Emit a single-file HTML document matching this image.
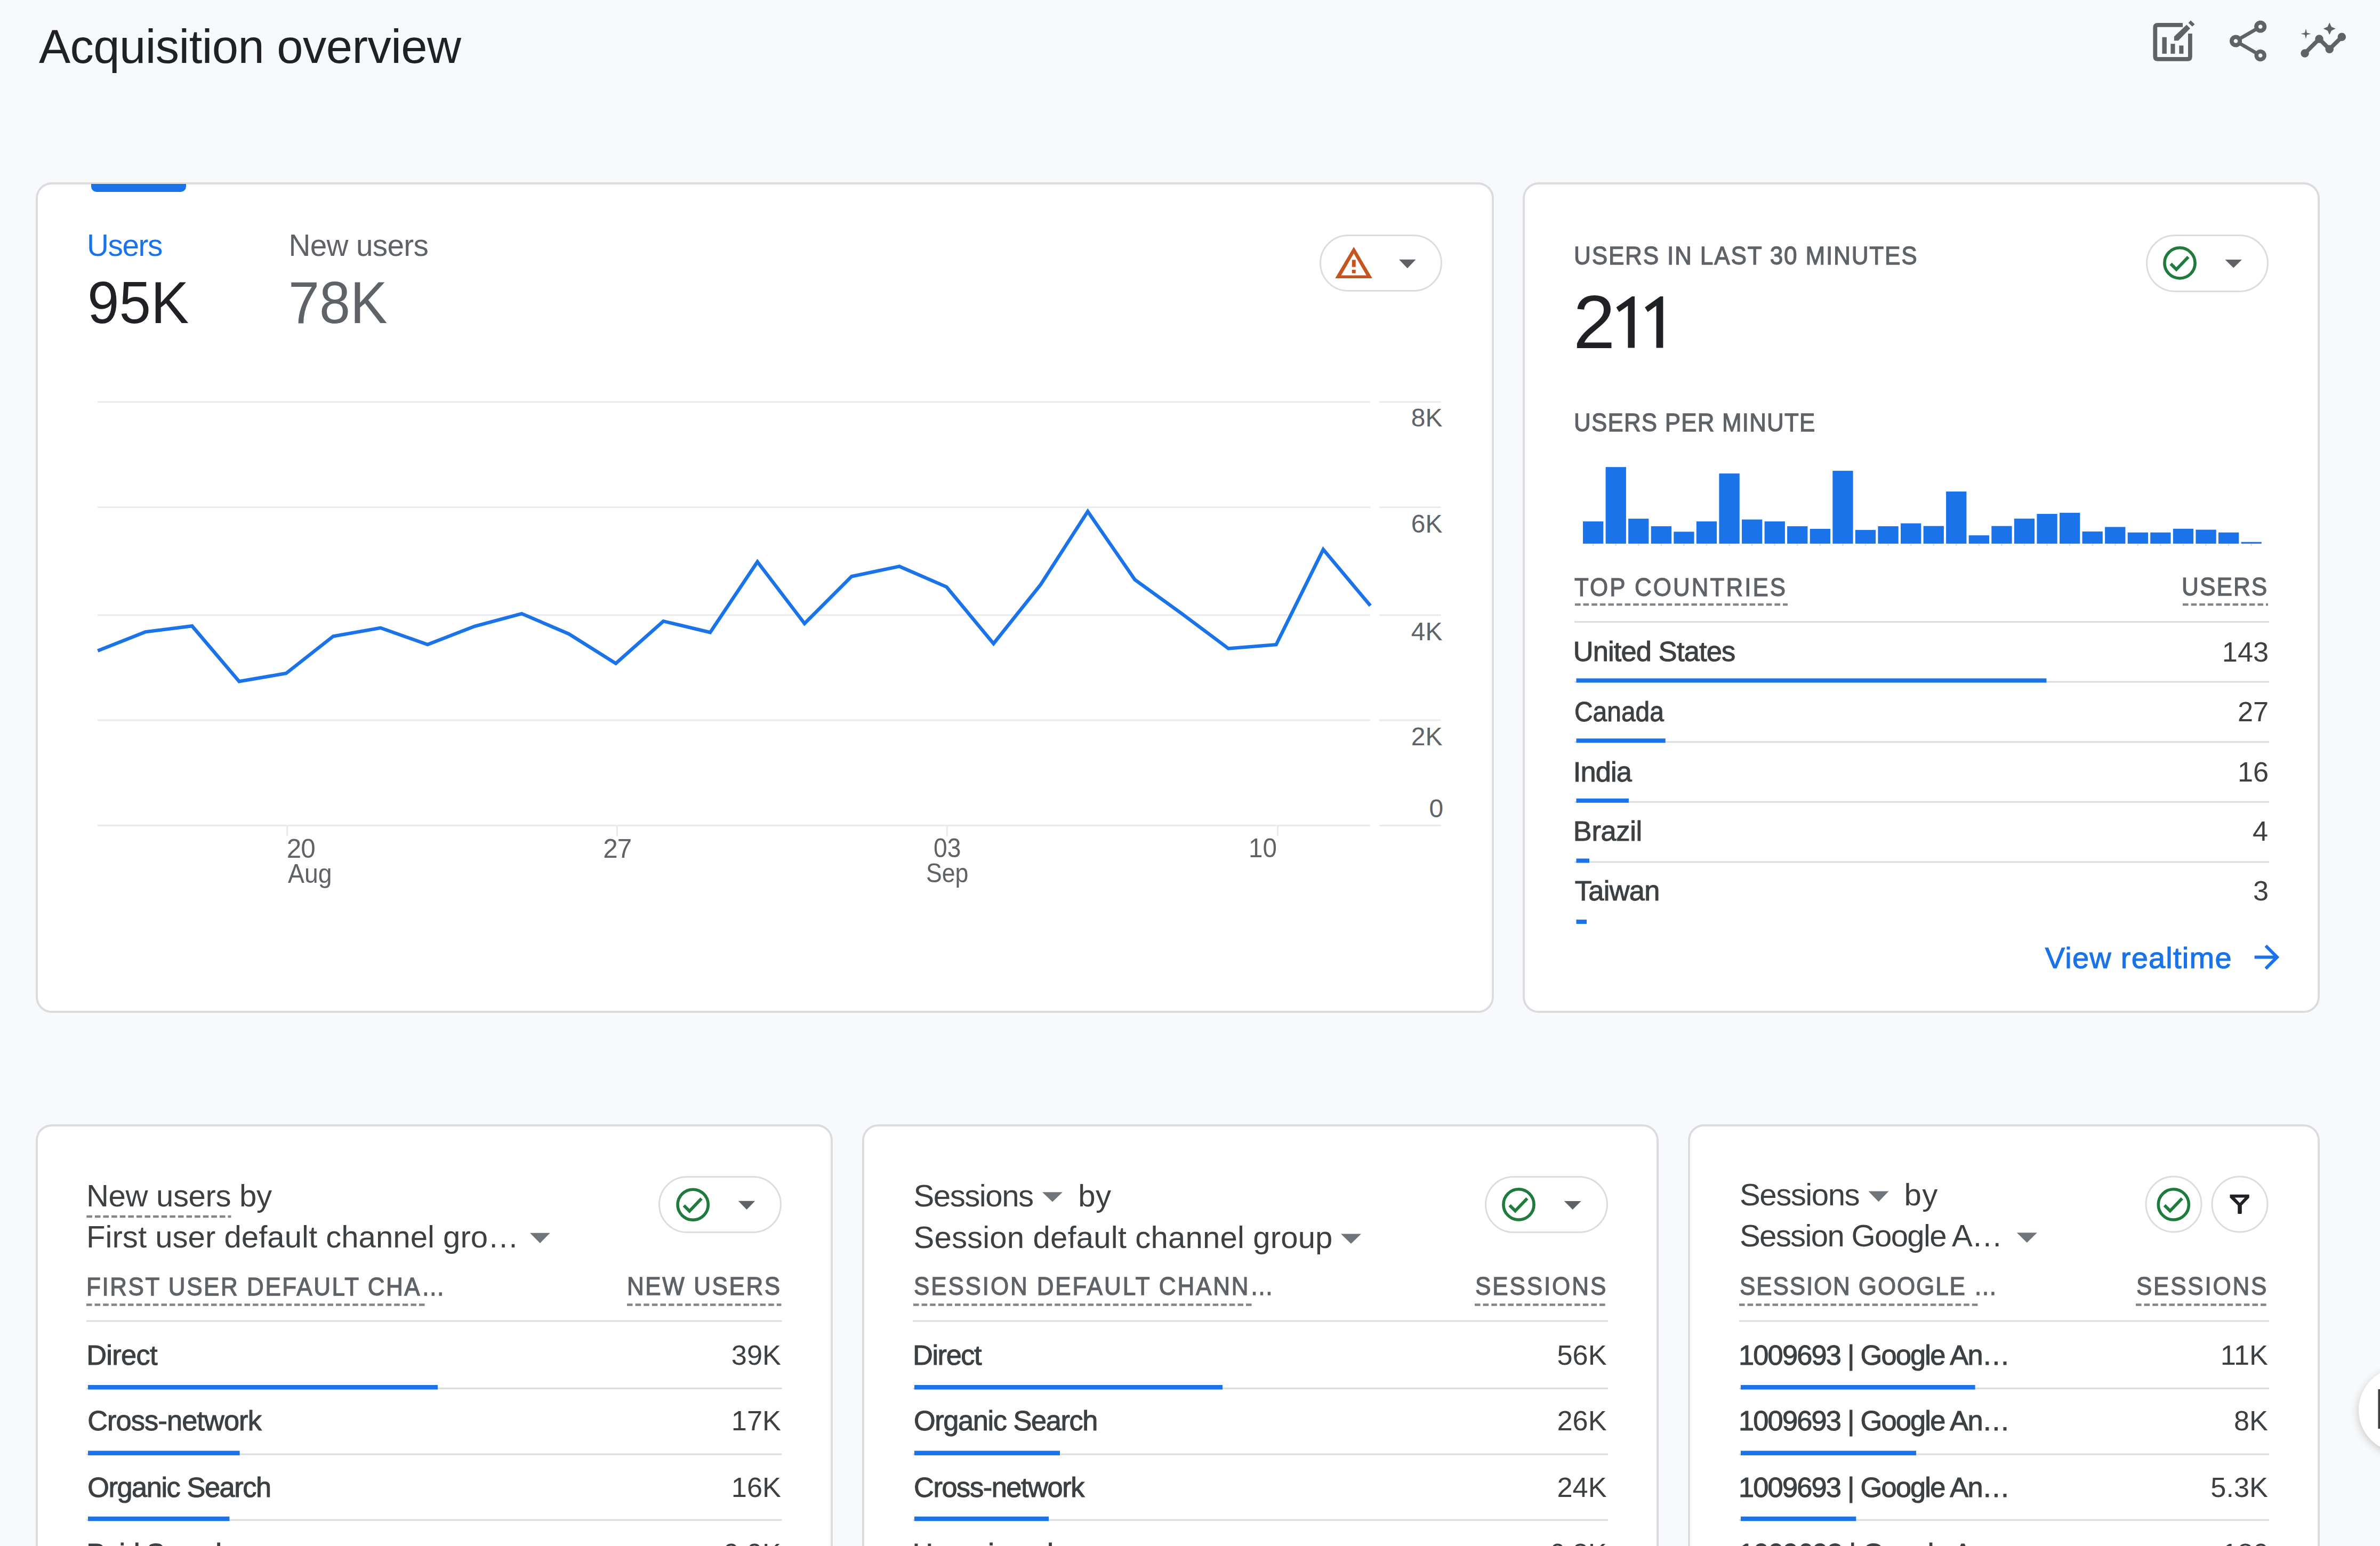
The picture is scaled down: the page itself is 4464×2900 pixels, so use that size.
<!DOCTYPE html>
<html><head><meta charset="utf-8"><style>
html,body{margin:0;padding:0;width:4464px;height:2900px;overflow:hidden;background:#f8f9fa;}
body{position:relative;font-family:"Liberation Sans",sans-serif;}
.card{position:absolute;background:#fff;border:4px solid #dadce0;border-radius:30px;box-sizing:border-box;}
.t{position:absolute;white-space:nowrap;font-family:"Liberation Sans",sans-serif;}
svg{position:absolute;left:0;top:0;}
</style></head><body>
<div class="card" style="left:67px;top:342px;width:2735px;height:1558px;"></div>
<div class="card" style="left:2856px;top:342px;width:1495px;height:1558px;"></div>
<div class="card" style="left:67px;top:2108.5px;width:1495px;height:900px;"></div>
<div class="card" style="left:1617px;top:2108.5px;width:1494px;height:900px;"></div>
<div class="card" style="left:3166px;top:2108.5px;width:1185px;height:900px;"></div>
<div style="position:absolute;left:171px;top:345px;width:178px;height:15px;background:#1a73e8;border-radius:0 0 10px 10px;"></div>
<svg width="4464" height="2900" viewBox="0 0 4464 2900">
<rect x="183.0" y="752.5" width="2387.0" height="3.0" rx="0" fill="#e8eaed"/>
<rect x="2587.0" y="752.5" width="115.5" height="3.0" rx="0" fill="#e8eaed"/>
<rect x="183.0" y="950.0" width="2387.0" height="3.0" rx="0" fill="#e8eaed"/>
<rect x="2587.0" y="950.0" width="115.5" height="3.0" rx="0" fill="#e8eaed"/>
<rect x="183.0" y="1152.3" width="2387.0" height="3.0" rx="0" fill="#e8eaed"/>
<rect x="2587.0" y="1152.3" width="115.5" height="3.0" rx="0" fill="#e8eaed"/>
<rect x="183.0" y="1349.5" width="2387.0" height="3.0" rx="0" fill="#e8eaed"/>
<rect x="2587.0" y="1349.5" width="115.5" height="3.0" rx="0" fill="#e8eaed"/>
<rect x="183.0" y="1547.0" width="2387.0" height="3.0" rx="0" fill="#e8eaed"/>
<rect x="2587.0" y="1547.0" width="115.5" height="3.0" rx="0" fill="#e8eaed"/>
<rect x="537.2" y="1548.5" width="3.0" height="20.0" rx="0" fill="#e8eaed"/>
<rect x="1155.9" y="1548.5" width="3.0" height="20.0" rx="0" fill="#e8eaed"/>
<rect x="1774.9" y="1548.5" width="3.0" height="20.0" rx="0" fill="#e8eaed"/>
<rect x="2395.1" y="1548.5" width="3.0" height="20.0" rx="0" fill="#e8eaed"/>
<polyline points="183.3,1220.7 272.5,1185.4 360.3,1174.3 448.5,1278.2 536.7,1263 625,1193.5 713.7,1177.8 802,1209 890.2,1174.8 978.5,1151.1 1066.7,1189 1155,1244.4 1244.2,1165.2 1332,1186.2 1420.6,1053.9 1509,1169.6 1597.3,1081.3 1686.9,1062.4 1775.2,1100.8 1863.5,1207.4 1951.9,1096.5 2040.2,959.4 2128.6,1087.4 2217,1151.3 2304,1216.5 2393.6,1209.2 2481.9,1030.7 2570.3,1136.1" fill="none" stroke="#1a73e8" stroke-width="6.5" stroke-linejoin="miter"/>
<rect x="2969.0" y="978.1" width="38.3" height="41.7" rx="0" fill="#1a73e8"/>
<rect x="2986.7" y="1020.5" width="3.0" height="3.0" rx="0" fill="#dadce0"/>
<rect x="3011.6" y="876.1" width="38.3" height="143.7" rx="0" fill="#1a73e8"/>
<rect x="3029.2" y="1020.5" width="3.0" height="3.0" rx="0" fill="#dadce0"/>
<rect x="3054.1" y="972.9" width="38.3" height="46.9" rx="0" fill="#1a73e8"/>
<rect x="3071.8" y="1020.5" width="3.0" height="3.0" rx="0" fill="#dadce0"/>
<rect x="3096.7" y="987.1" width="38.3" height="32.7" rx="0" fill="#1a73e8"/>
<rect x="3114.4" y="1020.5" width="3.0" height="3.0" rx="0" fill="#dadce0"/>
<rect x="3139.3" y="997.4" width="38.3" height="22.4" rx="0" fill="#1a73e8"/>
<rect x="3156.9" y="1020.5" width="3.0" height="3.0" rx="0" fill="#dadce0"/>
<rect x="3181.8" y="978.1" width="38.3" height="41.7" rx="0" fill="#1a73e8"/>
<rect x="3199.5" y="1020.5" width="3.0" height="3.0" rx="0" fill="#dadce0"/>
<rect x="3224.4" y="888.2" width="38.3" height="131.6" rx="0" fill="#1a73e8"/>
<rect x="3242.1" y="1020.5" width="3.0" height="3.0" rx="0" fill="#dadce0"/>
<rect x="3267.0" y="974.5" width="38.3" height="45.3" rx="0" fill="#1a73e8"/>
<rect x="3284.6" y="1020.5" width="3.0" height="3.0" rx="0" fill="#dadce0"/>
<rect x="3309.6" y="978.1" width="38.3" height="41.7" rx="0" fill="#1a73e8"/>
<rect x="3327.2" y="1020.5" width="3.0" height="3.0" rx="0" fill="#dadce0"/>
<rect x="3352.1" y="987.1" width="38.3" height="32.7" rx="0" fill="#1a73e8"/>
<rect x="3369.8" y="1020.5" width="3.0" height="3.0" rx="0" fill="#dadce0"/>
<rect x="3394.7" y="992.0" width="38.3" height="27.8" rx="0" fill="#1a73e8"/>
<rect x="3412.3" y="1020.5" width="3.0" height="3.0" rx="0" fill="#dadce0"/>
<rect x="3437.3" y="883.1" width="38.3" height="136.7" rx="0" fill="#1a73e8"/>
<rect x="3454.9" y="1020.5" width="3.0" height="3.0" rx="0" fill="#dadce0"/>
<rect x="3479.8" y="994.1" width="38.3" height="25.7" rx="0" fill="#1a73e8"/>
<rect x="3497.5" y="1020.5" width="3.0" height="3.0" rx="0" fill="#dadce0"/>
<rect x="3522.4" y="987.1" width="38.3" height="32.7" rx="0" fill="#1a73e8"/>
<rect x="3540.1" y="1020.5" width="3.0" height="3.0" rx="0" fill="#dadce0"/>
<rect x="3565.0" y="981.7" width="38.3" height="38.1" rx="0" fill="#1a73e8"/>
<rect x="3582.6" y="1020.5" width="3.0" height="3.0" rx="0" fill="#dadce0"/>
<rect x="3607.6" y="986.7" width="38.3" height="33.1" rx="0" fill="#1a73e8"/>
<rect x="3625.2" y="1020.5" width="3.0" height="3.0" rx="0" fill="#dadce0"/>
<rect x="3650.1" y="922.0" width="38.3" height="97.8" rx="0" fill="#1a73e8"/>
<rect x="3667.8" y="1020.5" width="3.0" height="3.0" rx="0" fill="#dadce0"/>
<rect x="3692.7" y="1004.2" width="38.3" height="15.6" rx="0" fill="#1a73e8"/>
<rect x="3710.3" y="1020.5" width="3.0" height="3.0" rx="0" fill="#dadce0"/>
<rect x="3735.3" y="986.7" width="38.3" height="33.1" rx="0" fill="#1a73e8"/>
<rect x="3752.9" y="1020.5" width="3.0" height="3.0" rx="0" fill="#dadce0"/>
<rect x="3777.8" y="972.8" width="38.3" height="47.0" rx="0" fill="#1a73e8"/>
<rect x="3795.5" y="1020.5" width="3.0" height="3.0" rx="0" fill="#dadce0"/>
<rect x="3820.4" y="964.0" width="38.3" height="55.8" rx="0" fill="#1a73e8"/>
<rect x="3838.1" y="1020.5" width="3.0" height="3.0" rx="0" fill="#dadce0"/>
<rect x="3863.0" y="961.9" width="38.3" height="57.9" rx="0" fill="#1a73e8"/>
<rect x="3880.6" y="1020.5" width="3.0" height="3.0" rx="0" fill="#dadce0"/>
<rect x="3905.5" y="997.0" width="38.3" height="22.8" rx="0" fill="#1a73e8"/>
<rect x="3923.2" y="1020.5" width="3.0" height="3.0" rx="0" fill="#dadce0"/>
<rect x="3948.1" y="988.5" width="38.3" height="31.3" rx="0" fill="#1a73e8"/>
<rect x="3965.8" y="1020.5" width="3.0" height="3.0" rx="0" fill="#dadce0"/>
<rect x="3990.7" y="998.8" width="38.3" height="21.0" rx="0" fill="#1a73e8"/>
<rect x="4008.3" y="1020.5" width="3.0" height="3.0" rx="0" fill="#dadce0"/>
<rect x="4033.2" y="998.8" width="38.3" height="21.0" rx="0" fill="#1a73e8"/>
<rect x="4050.9" y="1020.5" width="3.0" height="3.0" rx="0" fill="#dadce0"/>
<rect x="4075.8" y="991.8" width="38.3" height="28.0" rx="0" fill="#1a73e8"/>
<rect x="4093.5" y="1020.5" width="3.0" height="3.0" rx="0" fill="#dadce0"/>
<rect x="4118.4" y="993.6" width="38.3" height="26.2" rx="0" fill="#1a73e8"/>
<rect x="4136.0" y="1020.5" width="3.0" height="3.0" rx="0" fill="#dadce0"/>
<rect x="4161.0" y="998.8" width="38.3" height="21.0" rx="0" fill="#1a73e8"/>
<rect x="4178.6" y="1020.5" width="3.0" height="3.0" rx="0" fill="#dadce0"/>
<rect x="4203.5" y="1016.6" width="38.3" height="3.2" rx="0" fill="#1a73e8"/>
<rect x="4221.2" y="1020.5" width="3.0" height="3.0" rx="0" fill="#dadce0"/>
<line x1="2954" y1="1134" x2="3353" y2="1134" stroke="#80868b" stroke-width="4.5" stroke-dasharray="10.6 5.0"/>
<line x1="4094" y1="1134" x2="4254" y2="1134" stroke="#80868b" stroke-width="4.5" stroke-dasharray="10.6 5.0"/>
<rect x="2953.0" y="1165.0" width="1303.0" height="3.0" rx="0" fill="#dadce0"/>
<rect x="2953.0" y="1277.5" width="1303.0" height="3.0" rx="0" fill="#dadce0"/>
<rect x="2956.5" y="1272.5" width="881.9" height="8.0" rx="0" fill="#1a73e8"/>
<rect x="2953.0" y="1390.3" width="1303.0" height="3.0" rx="0" fill="#dadce0"/>
<rect x="2956.5" y="1385.3" width="167.2" height="8.0" rx="0" fill="#1a73e8"/>
<rect x="2953.0" y="1502.8" width="1303.0" height="3.0" rx="0" fill="#dadce0"/>
<rect x="2956.5" y="1497.8" width="98.4" height="8.0" rx="0" fill="#1a73e8"/>
<rect x="2953.0" y="1615.5" width="1303.0" height="3.0" rx="0" fill="#dadce0"/>
<rect x="2956.5" y="1610.5" width="24.5" height="8.0" rx="0" fill="#1a73e8"/>
<rect x="2956.5" y="1725.0" width="19.5" height="8.0" rx="0" fill="#1a73e8"/>
<line x1="162" y1="2447.5" x2="800" y2="2447.5" stroke="#80868b" stroke-width="4.5" stroke-dasharray="10.6 5.0"/>
<line x1="1176" y1="2447.5" x2="1465.4" y2="2447.5" stroke="#80868b" stroke-width="4.5" stroke-dasharray="10.6 5.0"/>
<rect x="162.0" y="2476.5" width="1304.5" height="3.0" rx="0" fill="#dadce0"/>
<rect x="162.0" y="2603.0" width="1304.5" height="3.0" rx="0" fill="#dadce0"/>
<rect x="165.0" y="2598.0" width="656.0" height="8.5" rx="0" fill="#1a73e8"/>
<rect x="162.0" y="2726.4" width="1304.5" height="3.0" rx="0" fill="#dadce0"/>
<rect x="165.0" y="2721.4" width="284.6" height="8.5" rx="0" fill="#1a73e8"/>
<rect x="162.0" y="2849.7" width="1304.5" height="3.0" rx="0" fill="#dadce0"/>
<rect x="165.0" y="2844.7" width="265.4" height="8.5" rx="0" fill="#1a73e8"/>
<line x1="1713" y1="2447.5" x2="2352" y2="2447.5" stroke="#80868b" stroke-width="4.5" stroke-dasharray="10.6 5.0"/>
<line x1="2766" y1="2447.5" x2="3014.7" y2="2447.5" stroke="#80868b" stroke-width="4.5" stroke-dasharray="10.6 5.0"/>
<rect x="1712.0" y="2476.5" width="1304.0" height="3.0" rx="0" fill="#dadce0"/>
<rect x="1712.0" y="2603.0" width="1304.0" height="3.0" rx="0" fill="#dadce0"/>
<rect x="1715.0" y="2598.0" width="578.0" height="8.5" rx="0" fill="#1a73e8"/>
<rect x="1712.0" y="2726.4" width="1304.0" height="3.0" rx="0" fill="#dadce0"/>
<rect x="1715.0" y="2721.4" width="273.0" height="8.5" rx="0" fill="#1a73e8"/>
<rect x="1712.0" y="2849.7" width="1304.0" height="3.0" rx="0" fill="#dadce0"/>
<rect x="1715.0" y="2844.7" width="252.0" height="8.5" rx="0" fill="#1a73e8"/>
<line x1="3262" y1="2447.5" x2="3710.4" y2="2447.5" stroke="#80868b" stroke-width="4.5" stroke-dasharray="10.6 5.0"/>
<line x1="4006" y1="2447.5" x2="4254.3" y2="2447.5" stroke="#80868b" stroke-width="4.5" stroke-dasharray="10.6 5.0"/>
<rect x="3262.0" y="2476.5" width="994.0" height="3.0" rx="0" fill="#dadce0"/>
<rect x="3262.0" y="2603.0" width="994.0" height="3.0" rx="0" fill="#dadce0"/>
<rect x="3265.0" y="2598.0" width="439.6" height="8.5" rx="0" fill="#1a73e8"/>
<rect x="3262.0" y="2726.4" width="994.0" height="3.0" rx="0" fill="#dadce0"/>
<rect x="3265.0" y="2721.4" width="329.0" height="8.5" rx="0" fill="#1a73e8"/>
<rect x="3262.0" y="2849.7" width="994.0" height="3.0" rx="0" fill="#dadce0"/>
<rect x="3265.0" y="2844.7" width="216.3" height="8.5" rx="0" fill="#1a73e8"/>
<line x1="162.3" y1="2282" x2="433.4" y2="2282" stroke="#80868b" stroke-width="4.5" stroke-dasharray="10.6 5.0"/>
<rect x="2476.5" y="441.5" width="227" height="104" rx="52.0" fill="#fff" stroke="#dadce0" stroke-width="3"/>
<rect x="4026.5" y="441.5" width="227" height="105" rx="52.5" fill="#fff" stroke="#dadce0" stroke-width="3"/>
<rect x="1236.5" y="2207.5" width="228" height="104" rx="52.0" fill="#fff" stroke="#dadce0" stroke-width="3"/>
<rect x="2786.5" y="2207.5" width="228" height="104" rx="52.0" fill="#fff" stroke="#dadce0" stroke-width="3"/>
<rect x="4025.0" y="2207.0" width="104" height="104" rx="52.0" fill="#fff" stroke="#dadce0" stroke-width="3"/>
<rect x="4149.0" y="2207.0" width="104" height="104" rx="52.0" fill="#fff" stroke="#dadce0" stroke-width="3"/>
<polygon points="2624.0,486.8 2655.5,486.8 2639.8,503.2" fill="#5f6368"/>
<polygon points="4173.5,486.9 4205.0,486.9 4189.2,502.6" fill="#5f6368"/>
<polygon points="1384.8,2252.8 1416.2,2252.8 1400.5,2269.0" fill="#5f6368"/>
<polygon points="2933.8,2253.0 2965.6,2253.0 2949.7,2269.0" fill="#5f6368"/>
<polygon points="994.0,2312.7 1031.7,2312.7 1012.9,2331.9" fill="#70757a"/>
<polygon points="1955.0,2236.3 1992.9,2236.3 1974.0,2254.4" fill="#70757a"/>
<polygon points="2515.0,2314.5 2553.0,2314.5 2534.0,2333.0" fill="#70757a"/>
<polygon points="3504.5,2234.6 3542.5,2234.6 3523.5,2254.2" fill="#70757a"/>
<polygon points="3782.8,2312.3 3820.8,2312.3 3801.8,2331.0" fill="#70757a"/>
<circle cx="4088.5" cy="493.4" r="28.6" fill="none" stroke="#1e7b3b" stroke-width="5.6"/>
<polyline points="4071.5,494.9 4082.0,505.4 4104.5,481.9" fill="none" stroke="#1e7b3b" stroke-width="5.8"/>
<circle cx="1299.7" cy="2259.8" r="28.6" fill="none" stroke="#1e7b3b" stroke-width="5.6"/>
<polyline points="1282.7,2261.3 1293.2,2271.8 1315.7,2248.3" fill="none" stroke="#1e7b3b" stroke-width="5.8"/>
<circle cx="2848.5" cy="2259.4" r="28.6" fill="none" stroke="#1e7b3b" stroke-width="5.6"/>
<polyline points="2831.5,2260.9 2842.0,2271.4 2864.5,2247.9" fill="none" stroke="#1e7b3b" stroke-width="5.8"/>
<circle cx="4076.8" cy="2259.4" r="28.6" fill="none" stroke="#1e7b3b" stroke-width="5.6"/>
<polyline points="4059.8,2260.9 4070.3,2271.4 4092.8,2247.9" fill="none" stroke="#1e7b3b" stroke-width="5.8"/>
<path d="M2539.2,462.9 L2573.9,522 L2504.3,522 Z M2539.2,475.5 L2515.6,516.4 L2562.9,516.4 Z" fill="#c5541f" fill-rule="evenodd"/>
<rect x="2535.8" y="487.4" width="6.9" height="13.3" rx="0" fill="#c5541f"/>
<rect x="2535.8" y="506.0" width="6.9" height="6.6" rx="0" fill="#c5541f"/>
<path d="M4182.5,2240.7 H4218.7 V2246.5 L4204.8,2261 V2275.5 Q4204.8,2277 4203.3,2277 H4198.7 Q4197.2,2277 4197.2,2275.5 V2261 L4182.5,2246.5 Z M4191.5,2246.5 L4201,2256.5 L4210.5,2246.5 Z" fill="#202124" fill-rule="evenodd"/>
<path d="M4228.6,1795.4 H4270 M4249.6,1774 L4271,1795.4 L4249.6,1816.8" fill="none" stroke="#1a73e8" stroke-width="6"/>
<path d="M4094,46.8 H4047 Q4042.3,46.8 4042.3,51.5 V106 Q4042.3,110.8 4047,110.8 H4103 Q4107.9,110.8 4107.9,106 V63" fill="none" stroke="#5f6368" stroke-width="7.8"/>
<rect x="4055.4" y="69.7" width="8.5" height="31.1" rx="0" fill="#5f6368"/>
<rect x="4071.4" y="82.2" width="8.1" height="18.6" rx="0" fill="#5f6368"/>
<rect x="4087.3" y="85.4" width="8.1" height="15.4" rx="0" fill="#5f6368"/>
<polygon points="4077.9,68.4 4101.2,46.4 4108.0,53.2 4085.7,76.2 4077.9,76.2" fill="#5f6368"/>
<polygon points="4104.7,42.9 4108.9,38.3 4116.4,45.5 4111.9,49.7" fill="#5f6368"/>
<g transform="translate(4170.4,30.8) scale(3.85)" fill="#5f6368"><path d="M18 16.08c-.76 0-1.44.3-1.96.77L8.91 12.7c.05-.23.09-.46.09-.7s-.04-.47-.09-.7l7.05-4.11c.54.5 1.25.81 2.04.81 1.66 0 3-1.34 3-3s-1.34-3-3-3-3 1.34-3 3c0 .24.04.47.09.7L8.04 9.81C7.5 9.31 6.79 9 6 9c-1.66 0-3 1.34-3 3s1.34 3 3 3c.79 0 1.5-.31 2.04-.81l7.12 4.16c-.05.21-.08.43-.08.65 0 1.61 1.31 2.92 2.92 2.92s2.92-1.31 2.92-2.92c0-1.61-1.31-2.92-2.92-2.92zM18 4c.55 0 1 .45 1 1s-.45 1-1 1-1-.45-1-1 .45-1 1-1zM6 13c-.55 0-1-.45-1-1s.45-1 1-1 1 .45 1 1-.45 1-1 1zm12 7.02c-.55 0-1-.45-1-1s.45-1 1-1 1 .45 1 1-.45 1-1 1z"/></g>
<g transform="translate(4311.5,30.7) scale(3.85)" fill="#5f6368"><path d="M21 8c-1.45 0-2.26 1.44-1.93 2.51l-3.55 3.56c-.3-.09-.74-.09-1.04 0l-2.55-2.55C12.27 10.45 11.46 9 10 9c-1.45 0-2.27 1.44-1.93 2.52l-4.56 4.55C2.44 15.74 1 16.55 1 18c0 1.1.9 2 2 2 1.45 0 2.26-1.44 1.93-2.51l4.55-4.56c.3.09.74.09 1.04 0l2.55 2.55C12.73 16.55 13.54 18 15 18c1.45 0 2.27-1.44 1.93-2.52l3.56-3.55c1.07.33 2.51-.48 2.51-1.93 0-1.1-.9-2-2-2z"/><path d="M15 9l.94-2.07L18 6l-2.06-.93L15 3l-.92 2.07L12 6l2.08.93z"/><path d="M3.5 11L4 9l2-.5L4 8l-.5-2L3 8l-2 .5L3 9z"/></g>
<polygon points="3061.0,556.0 3066.0,556.0 3066.0,652.5 3053.4,652.5 3053.4,573.5 3036.8,585.3 3031.5,576.5" fill="#202124"/>
<polygon points="3114.0,556.0 3119.4,556.0 3119.4,652.5 3106.6,652.5 3106.6,573.5 3090.6,585.3 3085.2,576.5" fill="#202124"/>
<defs><filter id="sh" x="-50%" y="-50%" width="200%" height="200%"><feDropShadow dx="0" dy="4" stdDeviation="8" flood-color="#000" flood-opacity="0.22"/></filter></defs>
<circle cx="4503.6" cy="2644.8" r="79.4" fill="#fff" filter="url(#sh)"/>
<rect x="4460.4" y="2606.0" width="8.0" height="74.0" rx="0" fill="#3c4043"/>
</svg>
<div class="t" style="left:73.0px;top:44.0px;font-size:88.66px;line-height:88.66px;letter-spacing:-0.59px;color:#202124;">Acquisition overview</div>
<div class="t" style="left:163.0px;top:433.0px;font-size:56.69px;line-height:56.69px;letter-spacing:-1.42px;color:#1a73e8;">Users</div>
<div class="t" style="left:541.5px;top:433.0px;font-size:56.69px;line-height:56.69px;letter-spacing:-0.68px;color:#5f6368;">New users</div>
<div class="t" style="left:164.2px;top:512.0px;font-size:111.92px;line-height:111.92px;letter-spacing:0.00px;color:#202124;transform:scaleX(0.9562);transform-origin:0 0;">95K</div>
<div class="t" style="left:540.8px;top:512.0px;font-size:111.92px;line-height:111.92px;letter-spacing:0.00px;color:#5f6368;transform:scaleX(0.9329);transform-origin:0 0;">78K</div>
<div class="t" style="left:2646.8px;top:760.4px;font-size:47.97px;line-height:47.97px;letter-spacing:0.00px;color:#5f6368;">8K</div>
<div class="t" style="left:2646.8px;top:959.0px;font-size:47.97px;line-height:47.97px;letter-spacing:0.00px;color:#5f6368;">6K</div>
<div class="t" style="left:2646.8px;top:1161.3px;font-size:47.97px;line-height:47.97px;letter-spacing:0.00px;color:#5f6368;">4K</div>
<div class="t" style="left:2646.8px;top:1357.5px;font-size:47.97px;line-height:47.97px;letter-spacing:0.00px;color:#5f6368;">2K</div>
<div class="t" style="left:2680.5px;top:1492.7px;font-size:47.97px;line-height:47.97px;letter-spacing:0.00px;color:#5f6368;">0</div>
<div class="t" style="left:537.8px;top:1566.6px;font-size:49.42px;line-height:49.42px;letter-spacing:-1.08px;color:#5f6368;">20</div>
<div class="t" style="left:539.8px;top:1613.5px;font-size:49.42px;line-height:49.42px;letter-spacing:0.00px;color:#5f6368;transform:scaleX(0.9388);transform-origin:0 0;">Aug</div>
<div class="t" style="left:1131.3px;top:1566.6px;font-size:49.42px;line-height:49.42px;letter-spacing:-0.98px;color:#5f6368;">27</div>
<div class="t" style="left:1751.1px;top:1565.7px;font-size:49.42px;line-height:49.42px;letter-spacing:0.00px;color:#5f6368;transform:scaleX(0.9337);transform-origin:0 0;">03</div>
<div class="t" style="left:1737.0px;top:1613.0px;font-size:49.42px;line-height:49.42px;letter-spacing:0.00px;color:#5f6368;transform:scaleX(0.9025);transform-origin:0 0;">Sep</div>
<div class="t" style="left:2342.1px;top:1565.7px;font-size:49.42px;line-height:49.42px;letter-spacing:0.00px;color:#5f6368;transform:scaleX(0.9628);transform-origin:0 0;">10</div>
<div class="t" style="left:2951.8px;top:454.5px;font-size:48.98px;line-height:48.98px;letter-spacing:2.03px;color:#5f6368;-webkit-text-stroke:1.37px #5f6368;transform:scaleX(0.9000);transform-origin:0 0;">USERS IN LAST 30 MINUTES</div>
<div class="t" style="left:2950.8px;top:533.8px;font-size:141.72px;line-height:141.72px;letter-spacing:-2.80px;color:#202124;">2</div>
<div class="t" style="left:2952.1px;top:768.0px;font-size:48.69px;line-height:48.69px;letter-spacing:1.40px;color:#5f6368;-webkit-text-stroke:1.36px #5f6368;transform:scaleX(0.9000);transform-origin:0 0;">USERS PER MINUTE</div>
<div class="t" style="left:2953.1px;top:1076.5px;font-size:48.69px;line-height:48.69px;letter-spacing:3.45px;color:#5f6368;-webkit-text-stroke:1.36px #5f6368;transform:scaleX(0.9000);transform-origin:0 0;">TOP COUNTRIES</div>
<div class="t" style="left:4091.9px;top:1076.0px;font-size:48.98px;line-height:48.98px;letter-spacing:2.32px;color:#5f6368;-webkit-text-stroke:1.37px #5f6368;transform:scaleX(0.9000);transform-origin:0 0;">USERS</div>
<div class="t" style="left:2950.8px;top:1196.2px;font-size:52.33px;line-height:52.33px;letter-spacing:-0.82px;color:#3c4043;-webkit-text-stroke:1.05px #3c4043;">United States</div>
<div class="t" style="left:2953.0px;top:1309.0px;font-size:52.33px;line-height:52.33px;letter-spacing:0.00px;color:#3c4043;-webkit-text-stroke:1.05px #3c4043;transform:scaleX(0.9160);transform-origin:0 0;">Canada</div>
<div class="t" style="left:2950.8px;top:1421.7px;font-size:52.33px;line-height:52.33px;letter-spacing:-0.87px;color:#3c4043;-webkit-text-stroke:1.05px #3c4043;">India</div>
<div class="t" style="left:2950.8px;top:1532.6px;font-size:52.33px;line-height:52.33px;letter-spacing:-0.30px;color:#3c4043;-webkit-text-stroke:1.05px #3c4043;">Brazil</div>
<div class="t" style="left:2953.8px;top:1644.8px;font-size:52.33px;line-height:52.33px;letter-spacing:-0.66px;color:#3c4043;-webkit-text-stroke:1.05px #3c4043;">Taiwan</div>
<div class="t" style="left:4167.8px;top:1196.5px;font-size:52.33px;line-height:52.33px;letter-spacing:0.00px;color:#3c4043;">143</div>
<div class="t" style="left:4196.9px;top:1309.4px;font-size:52.33px;line-height:52.33px;letter-spacing:0.00px;color:#3c4043;">27</div>
<div class="t" style="left:4196.9px;top:1421.7px;font-size:52.33px;line-height:52.33px;letter-spacing:0.00px;color:#3c4043;">16</div>
<div class="t" style="left:4225.0px;top:1532.6px;font-size:52.33px;line-height:52.33px;letter-spacing:0.00px;color:#3c4043;">4</div>
<div class="t" style="left:4226.0px;top:1644.8px;font-size:52.33px;line-height:52.33px;letter-spacing:0.00px;color:#3c4043;">3</div>
<div class="t" style="left:3835.7px;top:1768.6px;font-size:55.96px;line-height:55.96px;letter-spacing:1.25px;color:#1a73e8;-webkit-text-stroke:1.12px #1a73e8;">View realtime</div>
<div class="t" style="left:162.0px;top:2213.6px;font-size:58.14px;line-height:58.14px;letter-spacing:-0.37px;color:#3c4043;">New users by</div>
<div class="t" style="left:162.0px;top:2291.2px;font-size:58.14px;line-height:58.14px;letter-spacing:0.01px;color:#3c4043;">First user default channel gro…</div>
<div class="t" style="left:162.4px;top:2388.6px;font-size:48.84px;line-height:48.84px;letter-spacing:2.87px;color:#5f6368;-webkit-text-stroke:1.37px #5f6368;transform:scaleX(0.9000);transform-origin:0 0;">FIRST USER DEFAULT CHA…</div>
<div class="t" style="left:1176.0px;top:2388.0px;font-size:48.84px;line-height:48.84px;letter-spacing:2.91px;color:#5f6368;-webkit-text-stroke:1.37px #5f6368;transform:scaleX(0.9000);transform-origin:0 0;">NEW USERS</div>
<div class="t" style="left:162.2px;top:2515.8px;font-size:52.33px;line-height:52.33px;letter-spacing:-0.66px;color:#3c4043;-webkit-text-stroke:1.05px #3c4043;">Direct</div>
<div class="t" style="left:164.2px;top:2638.5px;font-size:52.33px;line-height:52.33px;letter-spacing:-0.89px;color:#3c4043;-webkit-text-stroke:1.05px #3c4043;">Cross-network</div>
<div class="t" style="left:164.2px;top:2764.0px;font-size:52.33px;line-height:52.33px;letter-spacing:-1.44px;color:#3c4043;-webkit-text-stroke:1.05px #3c4043;">Organic Search</div>
<div class="t" style="left:162.2px;top:2887.5px;font-size:52.33px;line-height:52.33px;letter-spacing:-1.40px;color:#3c4043;-webkit-text-stroke:1.05px #3c4043;">Paid Search</div>
<div class="t" style="left:1371.8px;top:2515.8px;font-size:52.33px;line-height:52.33px;letter-spacing:0.00px;color:#3c4043;">39K</div>
<div class="t" style="left:1371.8px;top:2638.5px;font-size:52.33px;line-height:52.33px;letter-spacing:0.00px;color:#3c4043;">17K</div>
<div class="t" style="left:1371.8px;top:2764.0px;font-size:52.33px;line-height:52.33px;letter-spacing:0.00px;color:#3c4043;">16K</div>
<div class="t" style="left:1357.3px;top:2887.5px;font-size:52.33px;line-height:52.33px;letter-spacing:0.00px;color:#3c4043;">9.9K</div>
<div class="t" style="left:1713.5px;top:2213.8px;font-size:58.14px;line-height:58.14px;letter-spacing:-1.47px;color:#3c4043;">Sessions</div>
<div class="t" style="left:2022.2px;top:2213.8px;font-size:58.14px;line-height:58.14px;letter-spacing:0.47px;color:#3c4043;">by</div>
<div class="t" style="left:1713.5px;top:2291.5px;font-size:58.14px;line-height:58.14px;letter-spacing:0.14px;color:#3c4043;">Session default channel group</div>
<div class="t" style="left:1713.7px;top:2388.0px;font-size:48.84px;line-height:48.84px;letter-spacing:3.21px;color:#5f6368;-webkit-text-stroke:1.37px #5f6368;transform:scaleX(0.9000);transform-origin:0 0;">SESSION DEFAULT CHANN…</div>
<div class="t" style="left:2767.2px;top:2387.5px;font-size:48.84px;line-height:48.84px;letter-spacing:3.26px;color:#5f6368;-webkit-text-stroke:1.37px #5f6368;transform:scaleX(0.9000);transform-origin:0 0;">SESSIONS</div>
<div class="t" style="left:1712.0px;top:2515.8px;font-size:52.33px;line-height:52.33px;letter-spacing:-1.40px;color:#3c4043;-webkit-text-stroke:1.05px #3c4043;">Direct</div>
<div class="t" style="left:1714.0px;top:2638.5px;font-size:52.33px;line-height:52.33px;letter-spacing:-1.40px;color:#3c4043;-webkit-text-stroke:1.05px #3c4043;">Organic Search</div>
<div class="t" style="left:1714.0px;top:2764.0px;font-size:52.33px;line-height:52.33px;letter-spacing:-1.40px;color:#3c4043;-webkit-text-stroke:1.05px #3c4043;">Cross-network</div>
<div class="t" style="left:1712.0px;top:2887.5px;font-size:52.33px;line-height:52.33px;letter-spacing:-1.40px;color:#3c4043;-webkit-text-stroke:1.05px #3c4043;">Unassigned</div>
<div class="t" style="left:2920.5px;top:2515.8px;font-size:52.33px;line-height:52.33px;letter-spacing:0.00px;color:#3c4043;">56K</div>
<div class="t" style="left:2920.5px;top:2638.5px;font-size:52.33px;line-height:52.33px;letter-spacing:0.00px;color:#3c4043;">26K</div>
<div class="t" style="left:2920.5px;top:2764.0px;font-size:52.33px;line-height:52.33px;letter-spacing:0.00px;color:#3c4043;">24K</div>
<div class="t" style="left:2906.0px;top:2887.5px;font-size:52.33px;line-height:52.33px;letter-spacing:0.00px;color:#3c4043;">6.3K</div>
<div class="t" style="left:3263.0px;top:2212.3px;font-size:58.14px;line-height:58.14px;letter-spacing:-1.47px;color:#3c4043;">Sessions</div>
<div class="t" style="left:3571.5px;top:2212.3px;font-size:58.14px;line-height:58.14px;letter-spacing:1.37px;color:#3c4043;">by</div>
<div class="t" style="left:3263.0px;top:2289.0px;font-size:58.14px;line-height:58.14px;letter-spacing:-1.68px;color:#3c4043;">Session Google A…</div>
<div class="t" style="left:3263.2px;top:2388.0px;font-size:48.84px;line-height:48.84px;letter-spacing:2.12px;color:#5f6368;-webkit-text-stroke:1.37px #5f6368;transform:scaleX(0.9000);transform-origin:0 0;">SESSION GOOGLE …</div>
<div class="t" style="left:4006.7px;top:2388.0px;font-size:48.84px;line-height:48.84px;letter-spacing:3.10px;color:#5f6368;-webkit-text-stroke:1.37px #5f6368;transform:scaleX(0.9000);transform-origin:0 0;">SESSIONS</div>
<div class="t" style="left:3261.0px;top:2515.8px;font-size:52.33px;line-height:52.33px;letter-spacing:-1.79px;color:#3c4043;-webkit-text-stroke:1.05px #3c4043;">1009693 | Google An…</div>
<div class="t" style="left:3261.0px;top:2638.5px;font-size:52.33px;line-height:52.33px;letter-spacing:-1.79px;color:#3c4043;-webkit-text-stroke:1.05px #3c4043;">1009693 | Google An…</div>
<div class="t" style="left:3261.0px;top:2764.0px;font-size:52.33px;line-height:52.33px;letter-spacing:-1.79px;color:#3c4043;-webkit-text-stroke:1.05px #3c4043;">1009693 | Google An…</div>
<div class="t" style="left:3261.0px;top:2887.5px;font-size:52.33px;line-height:52.33px;letter-spacing:-1.40px;color:#3c4043;-webkit-text-stroke:1.05px #3c4043;">1009693 | Google An…</div>
<div class="t" style="left:4164.7px;top:2515.8px;font-size:52.33px;line-height:52.33px;letter-spacing:0.00px;color:#3c4043;">11K</div>
<div class="t" style="left:4189.9px;top:2638.5px;font-size:52.33px;line-height:52.33px;letter-spacing:0.00px;color:#3c4043;">8K</div>
<div class="t" style="left:4146.3px;top:2764.0px;font-size:52.33px;line-height:52.33px;letter-spacing:0.00px;color:#3c4043;">5.3K</div>
<div class="t" style="left:4167.8px;top:2887.5px;font-size:52.33px;line-height:52.33px;letter-spacing:0.00px;color:#3c4043;">180</div>
</body></html>
